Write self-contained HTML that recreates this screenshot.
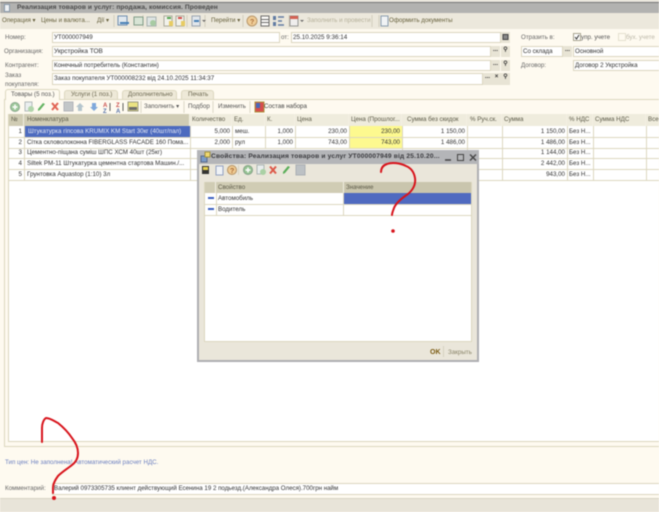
<!DOCTYPE html>
<html><head><meta charset="utf-8"><style>
html,body{margin:0;padding:0;width:659px;height:512px;overflow:hidden;background:#fefaf0}
#r{position:relative;width:659px;height:512px;overflow:hidden;font:6.2px/10px "Liberation Sans",sans-serif;color:#444;filter:blur(.42px);background:#fefaf0}
#r div,#r span{position:absolute;box-sizing:border-box;white-space:nowrap}
.f{background:#fff;border:1px solid #dcd6c0;height:11px;line-height:9px;padding-left:1px;color:#333}
.b{background:#e8e4d5;height:11px;width:9px;text-align:center;line-height:8px;color:#333;font-weight:bold}
.l{color:#666}
.h{top:114px;height:12px;background:#d0ccb4;border-right:1px solid #f2efe2;line-height:11px;padding-left:2px;color:#5c5a48;overflow:hidden}
.c{height:1px;background:#dcd7bf}
.v{width:1px;background:#dcd7bf}
.t{color:#333;line-height:10px}
.n{text-align:right;color:#333}
.s{width:1px;background:#d5d1c0}
</style></head><body><div id="r">

<div style="left:0;top:0;width:659px;height:3px;background:#e6e3da"></div>
<div style="left:0;top:2px;width:659px;height:1px;background:#777"></div>
<div style="left:0;top:3px;width:659px;height:10px;background:#b2b2b0"></div>
<div style="left:4px;top:4px;width:6px;height:8px;background:#eef0f2;border:1px solid #8899aa"></div>
<div style="left:17px;top:3px;font-weight:bold;font-size:6.6px;color:#4a4a4a;line-height:10px;letter-spacing:.09px">Реализация товаров и услуг: продажа, комиссия. Проведен</div>

<div style="left:0;top:13px;width:659px;height:16px;background:#ece8dc"></div>
<div style="left:2px;top:16px;color:#66603c">Операция ▾</div>
<div style="left:41px;top:16px;color:#66603c">Цены и валюта...</div>
<div style="left:97px;top:16px;color:#66603c">Дії ▾</div>
<div style="left:211px;top:16px;color:#66603c">Перейти ▾</div>
<div style="left:307px;top:16px;color:#b5b09a">Заполнить и провести</div>
<div style="left:389px;top:16px;color:#66603c">Оформить документы</div>
<svg style="position:absolute;left:0;top:13px;opacity:.85" width="400" height="16">
<g stroke="#cfcab8"><path d="M114 2v12M143 2v12M187 2v12M205 2v12M243 2v12M289 2v12M372 2v12M379 2v12"/></g>
<rect x="118" y="3" width="9" height="9" fill="#dfe8f2" stroke="#5a7fa8"/><path d="M120 10h9" stroke="#2c6fb0" stroke-width="2"/>
<rect x="134" y="4" width="9" height="8" fill="#d5e4d4" stroke="#6f8f7a"/>
<rect x="147" y="4" width="9" height="9" fill="#dde4e6" stroke="#9aa8a8"/><circle cx="153" cy="10" r="3" fill="#9cc79a"/>
<rect x="164" y="3" width="8" height="10" fill="#f4f4ee" stroke="#a0a090"/><rect x="169" y="8" width="4" height="5" fill="#e8c84e"/><path d="M167 5h4" stroke="#3a9a3a" stroke-width="2"/>
<rect x="176" y="3" width="8" height="10" fill="#f4f4ee" stroke="#a0a090"/><rect x="181" y="8" width="4" height="5" fill="#e8c84e"/><path d="M178 5h4" stroke="#d03030" stroke-width="2"/>
<rect x="192" y="3" width="8" height="10" fill="#e0e6ee" stroke="#8c98a8"/><path d="M194 8h5" stroke="#2a6fb0" stroke-width="2"/><path d="M202 7h4l-2 2z" fill="#555"/>
<circle cx="252" cy="8" r="5" fill="#f0c88a" stroke="#b08a58"/><text x="250" y="11" font-size="7" font-weight="bold" fill="#a05a20" font-family="Liberation Sans">?</text>
<rect x="261" y="3" width="8" height="10" fill="#fff" stroke="#555"/><path d="M261 6.500h8M261 9.500h8" stroke="#555"/>
<rect x="273" y="3" width="3" height="4" fill="#4a6a9a"/><rect x="273" y="9" width="3" height="4" fill="#4a6a9a"/><path d="M278 4h6M278 8h4M278 12h6" stroke="#4a6a9a" stroke-width="1.400"/>
<rect x="290" y="3" width="8" height="10" fill="#f0f0f0" stroke="#888"/><rect x="290" y="3" width="8" height="3" fill="#d04a3a"/><path d="M300 7h4l-2 2z" fill="#555"/>
<rect x="381" y="3" width="7" height="10" fill="#f2f6fa" stroke="#7a90a8"/>
</svg>

<!-- form rows -->
<div class="l" style="left:5px;top:33px">Номер:</div>
<div class="f" style="left:52px;top:32px;width:228px">УТ000007949</div>
<div class="l" style="left:281px;top:33px">от:</div>
<div class="f" style="left:291px;top:32px;width:210px;font-size:6.300px">25.10.2025 9:36:14</div>
<div class="b" style="left:501px;top:32px"><svg width="9" height="11"><rect x="2" y="2.500" width="5" height="5" fill="#888" stroke="#444"/></svg></div>

<div class="l" style="left:4px;top:47px">Организация:</div>
<div class="f" style="left:52px;top:46px;width:439px;font-size:6.500px">Укрстройка ТОВ</div>
<div class="b" style="left:491px;top:46px">...</div><div class="b" style="left:501px;top:46px">⚲</div>

<div class="l" style="left:5px;top:61px">Контрагент:</div>
<div class="f" style="left:52px;top:60px;width:439px">Конечный потребитель (Константин)</div>
<div class="b" style="left:491px;top:60px">...</div><div class="b" style="left:501px;top:60px">⚲</div>

<div class="l" style="left:5px;top:71px;line-height:9px">Заказ<br>покупателя:</div>
<div class="f" style="left:52px;top:73px;width:431px;height:12px;line-height:10px;font-size:6.250px">Заказ покупателя УТ000008232 від 24.10.2025 11:34:37</div>
<div class="b" style="left:483px;top:73px;height:12px">...</div><div class="b" style="left:492px;top:73px;height:12px">×</div><div class="b" style="left:501px;top:73px;height:12px">⚲</div>

<div class="l" style="left:521px;top:33px">Отразить в:</div>
<div style="left:573px;top:33px;width:8px;height:8px;background:#fff;border:1px solid #a8a490"></div>
<svg style="position:absolute;left:573px;top:33px" width="8" height="8"><path d="M2 4l1.500 2L6 2" fill="none" stroke="#333"/></svg>
<div style="left:581px;top:33px;color:#555">упр. учете</div>
<div style="left:618px;top:33px;width:8px;height:8px;border:1px solid #e5e1d0"></div>
<div style="left:626px;top:33px;color:#bcb8a8">бух. учете</div>
<div class="f" style="left:521px;top:46px;width:42px">Со склада</div>
<div class="b" style="left:563px;top:46px">...</div>
<div class="f" style="left:573px;top:46px;width:90px">Основной</div>
<div class="l" style="left:521px;top:61px">Договор:</div>
<div class="f" style="left:573px;top:60px;width:90px">Договор 2 Укрстройка</div>

<!-- tabs -->
<div style="left:4px;top:99px;width:660px;height:1px;background:#dcd7bf"></div>
<div style="left:5px;top:89px;width:55px;height:11px;background:#fefaf0;border:1px solid #dcd7bf;border-bottom:0;border-radius:3px 3px 0 0;line-height:9px;padding-left:5px;color:#555;z-index:1">Товары (5 поз.)</div>
<div style="left:64px;top:90px;width:54px;height:9px;background:#eee9d8;border:1px solid #dcd7bf;border-bottom:0;border-radius:3px 3px 0 0;line-height:8px;padding-left:6px;color:#6a664e">Услуги (1 поз.)</div>
<div style="left:122px;top:90px;width:55px;height:9px;background:#eee9d8;border:1px solid #dcd7bf;border-bottom:0;border-radius:3px 3px 0 0;line-height:8px;padding-left:5px;color:#6a664e">Дополнительно</div>
<div style="left:181px;top:90px;width:33px;height:9px;background:#eee9d8;border:1px solid #dcd7bf;border-bottom:0;border-radius:3px 3px 0 0;line-height:8px;padding-left:6px;color:#6a664e">Печать</div>

<!-- table toolbar -->
<svg style="position:absolute;left:0;top:100px;opacity:.85" width="270" height="14">
<circle cx="15" cy="7" r="4.500" fill="#8cc08a" stroke="#7a9a80"/><path d="M12.500 7h5M15 4.500v5" stroke="#fff" stroke-width="1.500"/>
<rect x="25" y="2" width="7" height="9" fill="#e8eef0" stroke="#a5b0b0"/><circle cx="31" cy="9" r="3" fill="#a4cfa0"/>
<path d="M38 11l2-1 5-6-2-1-5 6z" fill="#4aa84a"/>
<path d="M52 3l6 7M58 3l-6 7" stroke="#dc4a3a" stroke-width="2"/>
<rect x="64" y="2" width="9" height="9" fill="#b8bec2" stroke="#a5aab0"/>
<path d="M80 3l4 4h-2v4h-4v-4h-2z" fill="#a8bcc8"/>
<path d="M94 11l4-4h-2V3h-4v4h-2z" fill="#6a9ad8"/>
<text x="103" y="7" font-size="6" fill="#c03030" font-weight="bold" font-family="Liberation Sans">A</text><text x="103" y="13" font-size="6" fill="#3a5a9a" font-weight="bold" font-family="Liberation Sans">Z</text><path d="M110 3v8" stroke="#444"/>
<text x="116" y="7" font-size="6" fill="#c03030" font-weight="bold" font-family="Liberation Sans">Z</text><text x="116" y="13" font-size="6" fill="#3a5a9a" font-weight="bold" font-family="Liberation Sans">A</text><path d="M123 3v8" stroke="#444"/>
<rect x="128" y="2" width="10" height="9" fill="#e8e070" stroke="#8a8a70"/><rect x="129" y="7" width="8" height="3" fill="#555"/>
<g stroke="#d5d1c0"><path d="M141 1v12M184 1v12M213 1v12M250 1v12"/></g>
<rect x="255" y="2" width="9" height="10" fill="#d03030" stroke="#a08020"/><rect x="256" y="3" width="4" height="5" fill="#2a50b0"/>
</svg>
<div style="left:144px;top:102px;color:#555">Заполнить ▾</div>
<div style="left:188px;top:102px;color:#555">Подбор</div>
<div style="left:218px;top:102px;color:#555">Изменить</div>
<div style="left:264px;top:102px;color:#444">Состав набора</div>

<!-- table -->
<div style="left:4px;top:100px;width:1px;height:347px;background:#dcd7bf"></div>
<div style="left:4px;top:446px;width:660px;height:1px;background:#dcd7bf"></div>
<div style="left:8px;top:114px;width:660px;height:328px;background:#fff;border:1px solid #dcd7bf"></div>

<div class="h" style="left:9px;width:15px">№</div>
<div class="h" style="left:24px;width:166px;padding-left:3px">Номенклатура</div>
<div class="h" style="left:190px;width:42px;background:#efecdd">Количество</div>
<div class="h" style="left:232px;width:33px;background:#efecdd">Ед.</div>
<div class="h" style="left:265px;width:30px;background:#efecdd">К.</div>
<div class="h" style="left:295px;width:54px;background:#efecdd">Цена</div>
<div class="h" style="left:349px;width:53px;background:#efecdd">Цена (Прошлог...</div>
<div class="h" style="left:402px;width:65px;background:#efecdd;padding-left:5px">Сумма без скидок</div>
<div class="h" style="left:467px;width:35px;background:#efecdd;padding-left:3px">% Руч.ск.</div>
<div class="h" style="left:502px;width:65px;background:#efecdd">Сумма</div>
<div class="h" style="left:567px;width:26px;background:#efecdd">% НДС</div>
<div class="h" style="left:593px;width:53px;background:#efecdd">Сумма НДС</div>
<div class="h" style="left:646px;width:14px;background:#efecdd">Всего</div>

<div style="left:349px;top:126px;width:53px;height:22px;background:#fdf98f"></div>
<div style="left:24px;top:126px;width:166px;height:11px;background:#4d6bbf"></div>

<div class="c" style="left:9px;top:137px;width:650px"></div>
<div class="c" style="left:9px;top:148px;width:650px"></div>
<div class="c" style="left:9px;top:158px;width:650px"></div>
<div class="c" style="left:9px;top:169px;width:650px"></div>
<div class="c" style="left:9px;top:180px;width:650px"></div>
<div class="v" style="left:24px;top:126px;height:54px"></div>
<div class="v" style="left:190px;top:126px;height:54px"></div>
<div class="v" style="left:232px;top:126px;height:22px"></div>
<div class="v" style="left:265px;top:126px;height:22px"></div>
<div class="v" style="left:295px;top:126px;height:22px"></div>
<div class="v" style="left:349px;top:126px;height:22px"></div>
<div class="v" style="left:402px;top:126px;height:54px"></div>
<div class="v" style="left:467px;top:126px;height:54px"></div>
<div class="v" style="left:502px;top:126px;height:54px"></div>
<div class="v" style="left:567px;top:126px;height:54px"></div>
<div class="v" style="left:593px;top:126px;height:54px"></div>
<div class="v" style="left:646px;top:126px;height:54px"></div>

<div class="n" style="left:9px;top:127px;width:13px">1</div>
<div class="n" style="left:9px;top:138px;width:13px">2</div>
<div class="n" style="left:9px;top:148px;width:13px">3</div>
<div class="n" style="left:9px;top:159px;width:13px">4</div>
<div class="n" style="left:9px;top:170px;width:13px">5</div>

<div class="t" style="left:28px;top:127px;color:#e6eaf6">Штукатурка гіпсова KRUMIX KM Start 30кг (40шт/пал)</div>
<div class="t" style="left:27px;top:138px">Сітка скловолоконна FIBERGLASS FACADE 160 Пома...</div>
<div class="t" style="left:27px;top:148px">Цементно-піщана суміш ШПС ХСМ 40шт (25кг)</div>
<div class="t" style="left:27px;top:159px">Siltek PM-11 Штукатурка цементна стартова Машин./...</div>
<div class="t" style="left:27px;top:170px">Грунтовка Aquastop (1:10) 3л</div>

<div class="n" style="left:190px;top:127px;width:40px">5,000</div>
<div class="n" style="left:190px;top:138px;width:40px">2,000</div>
<div class="t" style="left:235px;top:127px">меш.</div>
<div class="t" style="left:235px;top:138px">рул</div>
<div class="n" style="left:265px;top:127px;width:28px">1,000</div>
<div class="n" style="left:265px;top:138px;width:28px">1,000</div>
<div class="n" style="left:295px;top:127px;width:52px">230,00</div>
<div class="n" style="left:295px;top:138px;width:52px">743,00</div>
<div class="n" style="left:349px;top:127px;width:51px">230,00</div>
<div class="n" style="left:349px;top:138px;width:51px">743,00</div>
<div class="n" style="left:402px;top:127px;width:63px">1 150,00</div>
<div class="n" style="left:402px;top:138px;width:63px">1 486,00</div>
<div class="n" style="left:502px;top:127px;width:63px">1 150,00</div>
<div class="n" style="left:502px;top:138px;width:63px">1 486,00</div>
<div class="n" style="left:502px;top:148px;width:63px">1 144,00</div>
<div class="n" style="left:502px;top:159px;width:63px">2 442,00</div>
<div class="n" style="left:502px;top:170px;width:63px">943,00</div>
<div class="t" style="left:569px;top:127px">Без Н...</div>
<div class="t" style="left:569px;top:138px">Без Н...</div>
<div class="t" style="left:569px;top:148px">Без Н...</div>
<div class="t" style="left:569px;top:159px">Без Н...</div>
<div class="t" style="left:569px;top:170px">Без Н...</div>

<!-- bottom -->
<div style="left:5px;top:458px;color:#6b7fc0">Тип цен: Не заполнена! Автоматический расчет НДС.</div>
<div class="l" style="left:5px;top:484px">Комментарий:</div>
<div class="f" style="left:52px;top:483px;width:610px;height:12px;line-height:10px;font-size:6.170px">Валерий 0973305735 клиент действующий Есенина 19 2 подьезд.(Александра Олеся).700грн найм</div>
<div style="left:0;top:498px;width:659px;height:14px;background:#e8e4d9;border-top:1px solid #d8d4c4"></div>

<!-- dialog -->
<div style="left:197px;top:150px;width:282px;height:212px;background:#eae6da;border:2px solid #aeaeb2;border-top:0"></div>
<div style="left:197px;top:150px;width:282px;height:14px;background:#b4b5b8"></div>
<svg style="position:absolute;left:200px;top:151px" width="12" height="12"><rect x="1" y="5" width="6" height="6" fill="#7a9ac8" stroke="#5a6a8a"/><rect x="5" y="1" width="5" height="5" fill="#f0d870" stroke="#a09040"/></svg>
<div style="left:211px;top:152px;font-weight:bold;font-size:6.600px;color:#3a3a3e;line-height:10px;letter-spacing:.2px">Свойства: Реализация товаров и услуг УТ000007949 від 25.10.20...</div>
<svg style="position:absolute;left:443px;top:151px" width="36" height="12"><path d="M2 9h6" stroke="#444" stroke-width="1.500"/><rect x="14.500" y="3.500" width="6" height="6" fill="none" stroke="#444"/><path d="M27 3.500l6 6M33 3.500l-6 6" stroke="#444" stroke-width="1.400"/></svg>

<svg style="position:absolute;left:199px;top:164px;opacity:.9" width="120" height="14">
<rect x="3" y="2" width="7" height="8" fill="#222"/><rect x="4" y="3" width="5" height="3" fill="#e8d040"/>
<rect x="17" y="2" width="7" height="9" fill="#f0f4f8" stroke="#8a9ac0"/>
<circle cx="33" cy="6" r="4.500" fill="#f0c88a" stroke="#b08a58"/><text x="31" y="9" font-size="7" font-weight="bold" fill="#a05a20" font-family="Liberation Sans">?</text>
<path d="M39.500 1v10" stroke="#d5d1c0"/>
<circle cx="49" cy="6" r="4.500" fill="#8cc08a" stroke="#7a9a80"/><path d="M46.500 6h5M49 3.500v5" stroke="#fff" stroke-width="1.500"/>
<rect x="58" y="1" width="7" height="9" fill="#e8eef0" stroke="#a5b0b0"/><circle cx="64" cy="8" r="3" fill="#a4cfa0"/>
<path d="M71 2.500l6 7M77 2.500l-6 7" stroke="#dc4a3a" stroke-width="2"/>
<path d="M84 10l2-1 5-6-2-1-5 6z" fill="#4aa84a"/>
<rect x="97" y="1" width="9" height="10" fill="#b8bec2" stroke="#a5aab0"/>
</svg>

<div style="left:204px;top:182px;width:268px;height:160px;background:#fff;border:1px solid #dcd7bf"></div>
<div style="left:205px;top:182px;width:11px;height:11px;background:#d0ccb4;border-right:1px solid #f2efe2"></div>
<div style="left:216px;top:182px;width:128px;height:11px;background:#d0ccb4;border-right:1px solid #f2efe2;line-height:11px;padding-left:2px;color:#5c5a48">Свойство</div>
<div style="left:344px;top:182px;width:127px;height:11px;background:#c9c5ad;line-height:11px;padding-left:2px;color:#5c5a48">Значение</div>
<div style="left:344px;top:193px;width:127px;height:11px;background:#4f6ac0"></div>
<div class="c" style="left:205px;top:204px;width:266px"></div>
<div class="c" style="left:205px;top:215px;width:266px"></div>
<div class="v" style="left:216px;top:193px;height:22px"></div>
<div class="v" style="left:343px;top:193px;height:22px"></div>
<div style="left:208px;top:197px;width:6px;height:2px;background:#3a5fc0"></div>
<div style="left:208px;top:208px;width:6px;height:2px;background:#3a5fc0"></div>
<div class="t" style="left:218px;top:194px">Автомобиль</div>
<div class="t" style="left:218px;top:205px">Водитель</div>
<div style="left:430px;top:348px;font-weight:bold;color:#7a5a10;font-size:7px">OK</div>
<div class="s" style="left:443px;top:346px;height:11px"></div>
<div style="left:448px;top:348px;color:#8a8468">Закрыть</div>

<!-- red handwriting -->
<svg style="position:absolute;left:0;top:0" width="659" height="512" fill="none" stroke="#d8141c" stroke-width="2" stroke-linecap="round" stroke-linejoin="round">
<path d="M381 172C381 167 384 165 387 164C392 162 400 163 406 166C411 168 414 172 415 178C416 184 413 190 408 194C402 198 396 203 394 208C393 211 392 213 392 215"/>
<circle cx="393" cy="231" r="1.800" fill="#d8141c" stroke="none"/>
<path d="M42 442V428C42 423 44 419 46 418C50 418 54 421 58 423C63 427 68 432 72 438C76 443 78 448 78 453C78 458 76 462 72 465C67 469 62 472 58 476C55 480 53 484 53 488V493"/>
<circle cx="54" cy="498" r="2" fill="#d8141c" stroke="none"/>
</svg>
</div></body></html>
